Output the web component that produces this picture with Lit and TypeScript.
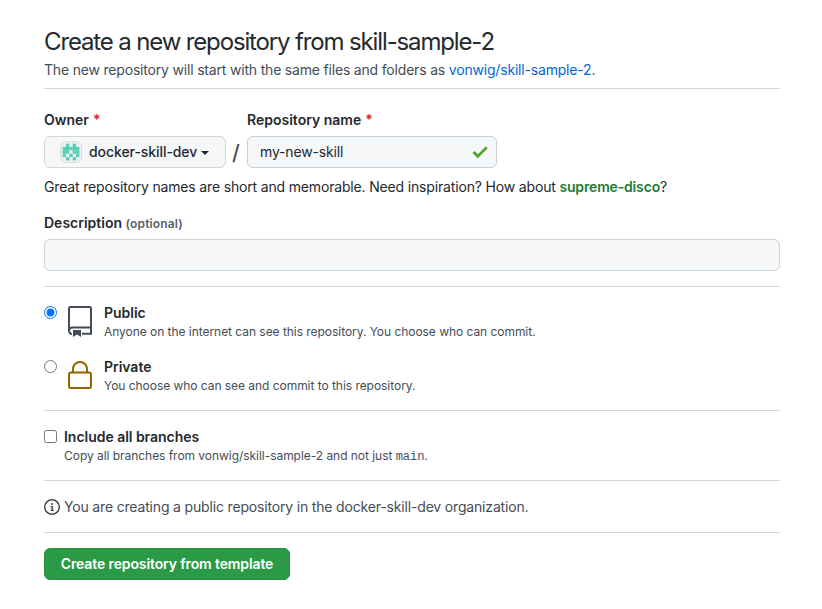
import { LitElement, html, css, svg } from "lit";
import { customElement } from "lit/decorators.js";

const identicon = ["01010", "11111", "11011", "10101", "01010"];

@customElement("app-root")
export class AppRoot extends LitElement {
  static styles = css`
    :host { display: block; box-sizing: border-box; width: 822px; height: 609px; padding: 24px 42px 0 44px; background: #fff; color: #24292e; font: 14px/21px Inter, "Liberation Sans", sans-serif; overflow: hidden; }
    * { box-sizing: border-box; }
    h1, p { margin: 0; }
    .t { display: block; width: fit-content; white-space: nowrap; }
    header { height: 65px; border-bottom: 1px solid #d1d8e0; }
    h1 { font-size: 24px; font-weight: 400; line-height: 36px; letter-spacing: -1.14px; }
    header p { color: #444d56; letter-spacing: -0.187px; line-height: 20px; }
    .blue { color: #0366d6; }
    .names { display: grid; grid-template-columns: 182px 21px 250px; height: 79px; padding-top: 20px; }
    .label { font-weight: 600; height: 27px; line-height: 22px; }
    .req { color: #cb2431; margin-left: 0.5px; }
    .owner, .field { display: flex; align-items: center; height: 32px; border: 1px solid #d1d5da; border-radius: 6px; background: #f5f7f9; }
    .field { border-color: #c8d0d9; padding: 0 8px 0 12px; justify-content: space-between; }
    .field span { letter-spacing: -0.15px; line-height: 20px; padding-bottom: 1px; }
    .owner { padding-left: 15px; font-weight: 500; }
    .owner span { letter-spacing: -0.07px; padding-bottom: 1px; }
    .owner svg { margin-right: 7px; }
    .caret { border: 4px solid transparent; border-top-color: #24292e; border-bottom: 0; margin: 1px 0 0 4px; }
    .slash { padding: 32px 0 0 6px; }
    .slash span { display: block; font: 500 21px/24px Inter, sans-serif; color: #444d56; }
    .hint { margin-top: 8px; letter-spacing: -0.165px; }
    .hint b { font-weight: 600; color: #1e7b35; }
    .desc { margin-top: 15px; height: 27px; font-weight: 600; }
    .desc small { font-size: 12px; color: #586069; letter-spacing: 0.14px; }
    .choices { margin-top: 15px; height: 124px; border-top: 1px solid #d1d8e0; padding-top: 15px; }
    .choice { display: grid; grid-template-columns: 24px 36px 1fr; height: 54px; }
    .choice strong, .branches strong { display: block; font-weight: 600; line-height: 21px; height: 21px; letter-spacing: -0.03px; }
    .note { font-size: 12px; line-height: 18px; color: #444d56; letter-spacing: -0.042px; }
    input { margin: 4px 0 0; width: 13px; height: 13px; accent-color: #0075ff; }
    .branches { display: grid; grid-template-columns: 20px 1fr; height: 70px; border-top: 1px solid #d1d8e0; padding-top: 15px; }
    code { font: 12px/16px "Liberation Mono", monospace; }
    .info { display: flex; align-items: center; gap: 4px; height: 53px; border-top: 1px solid #d1d8e0; border-bottom: 1px solid #d1d8e0; color: #444d56; }
    .info span { letter-spacing: -0.17px; }
    button { display: block; margin-top: 15px; width: 246px; height: 32px; padding: 0 0 2px; border: 1px solid #26903f; border-radius: 6px; background: #2a9a46; color: #fff; font: 600 14px Inter, sans-serif; letter-spacing: -0.12px; }
  `;

  render() {
    return html`
      <header>
        <h1 class="t">Create a new repository from skill-sample-2</h1>
        <p class="t">The new repository will start with the same files and folders as <span class="blue">vonwig/skill-sample-2</span>.</p>
      </header>
      <div class="names">
        <div>
          <div class="label">Owner <span class="req">*</span></div>
          <div class="owner">
            <svg width="22" height="22"><rect x=".5" y=".5" width="21" height="21" rx="5" fill="#f0f0f0" stroke="#d9dddf"/>${identicon.map((row, y) => [...row].map((v, x) => v === "1" ? svg`<rect x=${2.6 + x * 3.36} y=${2.6 + y * 3.36} width="3.4" height="3.4" fill="#57cfb5"/>` : ""))}</svg>
            <span>docker-skill-dev</span><i class="caret"></i>
          </div>
        </div>
        <div class="slash"><span>/</span></div>
        <div>
          <div class="label">Repository name <span class="req">*</span></div>
          <div class="field"><span>my-new-skill</span><svg width="16" height="16" viewBox="0 0 16 16"><path d="M1.5 8 5.8 12.3 14.7 3.4" fill="none" stroke="#4ba52b" stroke-width="2.7"/></svg></div>
        </div>
      </div>
      <p class="t hint">Great repository names are short and memorable. Need inspiration? How about <b>supreme-disco</b>?</p>
      <div class="desc">Description <small>(optional)</small></div>
      <div class="field"></div>
      <div class="choices">
        <div class="choice">
          <input type="radio" name="visibility" checked>
          <svg width="24" height="36" viewBox="0 0 24 36" fill="none" stroke="#444d56" stroke-width="2"><path d="M4 31.8a3 3 0 0 1-3-3V6.5A1.5 1.5 0 0 1 2.500 5h19A1.500 1.500 0 0 1 23 6.500v25.300h-9M1 28.800a3.300 3.300 0 0 1 3.300-3.300H23"/><path fill="#444d56" stroke="none" d="M5 28h8v7l-4-2.500L5 35z"/></svg>
          <div><strong>Public</strong><div class="note">Anyone on the internet can see this repository. You choose who can commit.</div></div>
        </div>
        <div class="choice">
          <input type="radio" name="visibility">
          <svg width="24" height="34" viewBox="0 0 24 34" fill="none" stroke="#966300" stroke-width="2"><rect x="1" y="16.5" width="22" height="15.500" rx="2"/><path d="M5 16.500v-3.500a7 7 0 0 1 14 0v3.500"/></svg>
          <div><strong>Private</strong><div class="note">You choose who can see and commit to this repository.</div></div>
        </div>
      </div>
      <div class="branches">
        <input type="checkbox">
        <div><strong>Include all branches</strong><div class="note">Copy all branches from vonwig/skill-sample-2 and not just <code>main</code>.</div></div>
      </div>
      <div class="info"><svg width="16" height="16" viewBox="0 0 16 16"><path fill="#444d56" d="M8 1.5a6.5 6.5 0 1 0 0 13 6.5 6.5 0 0 0 0-13zM0 8a8 8 0 1 1 16 0A8 8 0 0 1 0 8zm6.5-.25A.75.75 0 0 1 7.25 7h1a.75.75 0 0 1 .75.75v2.75h.25a.75.75 0 0 1 0 1.5h-2a.75.75 0 0 1 0-1.5h.25v-2h-.25a.75.75 0 0 1-.75-.75zM8 6a1 1 0 1 0 0-2 1 1 0 0 0 0 2z"/></svg><span>You are creating a public repository in the docker-skill-dev organization.</span></div>
      <button>Create repository from template</button>
    `;
  }
}
